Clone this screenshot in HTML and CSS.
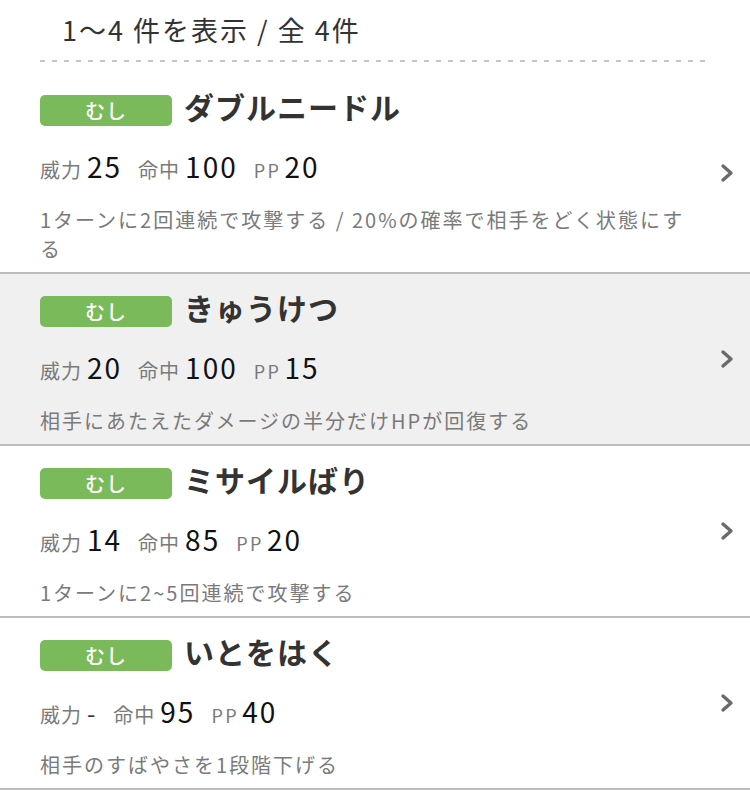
FILE: index.html
```html
<!DOCTYPE html>
<html lang="ja">
<head>
<meta charset="utf-8">
<link rel="stylesheet" href="styles.css">
</head>
<body>
<div class="count">1〜4 件を表示 / 全 4件</div>
<div class="dash"></div>
<ul class="moves">
  <li class="move">
    <div class="body">
      <div class="head"><span class="type">むし</span><span class="name">ダブルニードル</span></div>
      <div class="stats"><span class="lbl">威力</span><span class="val">25</span><span class="lbl">命中</span><span class="val">100</span><span class="lbl pp">PP</span><span class="val">20</span></div>
      <p class="desc">1ターンに2回連続で攻撃する / 20%の確率で相手をどく状態にする</p>
    </div>
    <svg class="chev" width="14" height="20" viewBox="0 0 14 20"><polyline points="3,3 11,10 3,17" fill="none" stroke="#6a6a6a" stroke-width="3.4" stroke-linecap="round" stroke-linejoin="round"/></svg>
  </li>
  <li class="move active">
    <div class="body">
      <div class="head"><span class="type">むし</span><span class="name">きゅうけつ</span></div>
      <div class="stats"><span class="lbl">威力</span><span class="val">20</span><span class="lbl">命中</span><span class="val">100</span><span class="lbl pp">PP</span><span class="val">15</span></div>
      <p class="desc">相手にあたえたダメージの半分だけHPが回復する</p>
    </div>
    <svg class="chev" width="14" height="20" viewBox="0 0 14 20"><polyline points="3,3 11,10 3,17" fill="none" stroke="#6a6a6a" stroke-width="3.4" stroke-linecap="round" stroke-linejoin="round"/></svg>
  </li>
  <li class="move">
    <div class="body">
      <div class="head"><span class="type">むし</span><span class="name">ミサイルばり</span></div>
      <div class="stats"><span class="lbl">威力</span><span class="val">14</span><span class="lbl">命中</span><span class="val">85</span><span class="lbl pp">PP</span><span class="val">20</span></div>
      <p class="desc">1ターンに2~5回連続で攻撃する</p>
    </div>
    <svg class="chev" width="14" height="20" viewBox="0 0 14 20"><polyline points="3,3 11,10 3,17" fill="none" stroke="#6a6a6a" stroke-width="3.4" stroke-linecap="round" stroke-linejoin="round"/></svg>
  </li>
  <li class="move">
    <div class="body">
      <div class="head"><span class="type">むし</span><span class="name">いとをはく</span></div>
      <div class="stats"><span class="lbl">威力</span><span class="val dash-val">-</span><span class="lbl">命中</span><span class="val">95</span><span class="lbl pp">PP</span><span class="val">40</span></div>
      <p class="desc">相手のすばやさを1段階下げる</p>
    </div>
    <svg class="chev" width="14" height="20" viewBox="0 0 14 20"><polyline points="3,3 11,10 3,17" fill="none" stroke="#6a6a6a" stroke-width="3.4" stroke-linecap="round" stroke-linejoin="round"/></svg>
  </li>
</ul>
</body>
</html>
```
FILE: styles.css
```css
html, body {
  margin: 0;
  padding: 0;
  background: #fff;
  font-family: "Noto Sans CJK JP", "Noto Sans", sans-serif;
  color: #333;
}
.count {
  height: 60px;
  line-height: 60px;
  padding-left: 62px;
  font-size: 27px;
  letter-spacing: 2px;
  color: #333;
}
.dash {
  margin: 0 40px;
  height: 2px;
  background: repeating-linear-gradient(to right, #c6c6c6 0 5px, transparent 5px 12px);
}
.moves {
  list-style: none;
  margin: 11px 0 0;
  padding: 0;
}
.move {
  display: flex;
  align-items: center;
  border-bottom: 2px solid #bdbdbd;
}
.move.active {
  background: #f0f0f0;
}
.body {
  flex: 1;
  padding: 22px 0 9px 40px;
  min-width: 0;
}
.head {
  display: flex;
  align-items: center;
  height: 31px;
}
.type {
  width: 132px;
  height: 31px;
  line-height: 31px;
  border-radius: 5px;
  background: #7aba5b;
  color: #fff;
  font-size: 20px;
  font-weight: 500;
  text-align: center;
  letter-spacing: 1px;
}
.name {
  margin-left: 12px;
  margin-bottom: 10px;
  font-size: 30px;
  font-weight: 700;
  color: #333;
  letter-spacing: 1px;
}
.stats {
  display: flex;
  align-items: baseline;
  height: 42px;
  line-height: 42px;
  margin-top: 19px;
}
.lbl {
  font-size: 20px;
  color: #7a7a7a;
  margin-right: 5px;
  letter-spacing: 1px;
}
.lbl.pp {
  font-size: 18px;
  letter-spacing: 2.5px;
  margin-right: 3px;
}
.val {
  font-size: 28px;
  color: #111;
  margin-right: 16px;
  letter-spacing: 2px;
  font-weight: 400;
}
.dash-val {
  font-size: 24px;
  color: #333;
}
.desc {
  margin: 18px 0 0;
  width: 662px;
  font-size: 20px;
  line-height: 29px;
  letter-spacing: 2px;
  color: #7a7a7a;
}
.chev {
  margin-right: 16px;
  flex: none;
}
```
